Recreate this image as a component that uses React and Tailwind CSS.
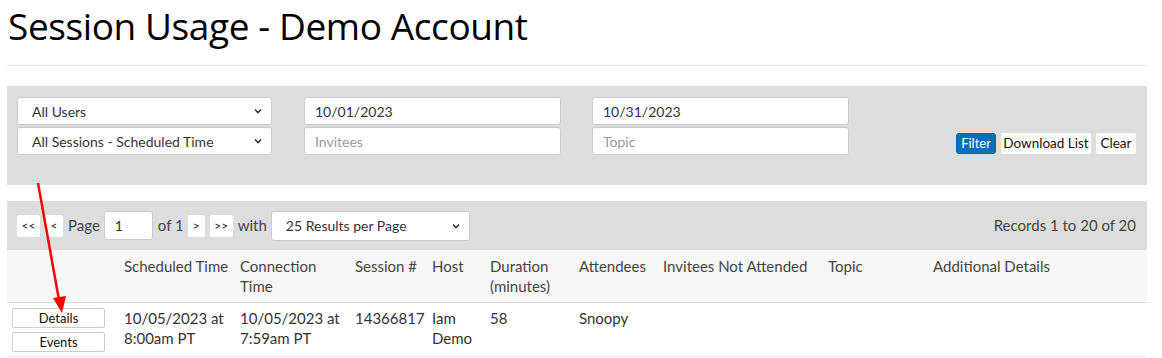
export default function App() {
  const font = { fontFamily: "Lato, 'Noto Sans', sans-serif" };
  const Chevron = () => (
    <svg width="10" height="10" viewBox="0 0 10 10" className="shrink-0">
      <path d="M2 3.5 L5 6.5 L8 3.5" fill="none" stroke="#333" strokeWidth="1.6" />
    </svg>
  );
  const Select = ({ text, className = "" }) => (
    <div className={`flex items-center justify-between bg-white border border-[#ccc] rounded-[3px] h-[28px] pl-[14px] pr-[8px] text-[14px] text-[#333] ${className}`}>
      <span>{text}</span>
      <Chevron />
    </div>
  );
  const Input = ({ text, placeholder }) => (
    <div className={`flex items-center bg-white border border-[#ccc] rounded-[3px] h-[28px] w-[257px] px-[10px] text-[14px] ${placeholder ? "text-[#999]" : "text-[#333]"}`}>
      {text}
    </div>
  );
  const SmallBtn = ({ children, className = "" }) => (
    <div className={`flex items-center justify-center bg-white rounded-[2px] h-[22px] text-[12px] text-[#222] ${className}`}>{children}</div>
  );
  const cols = [
    { w: 117, h: "" },
    { w: 116, h: "Scheduled Time" },
    { w: 115, h: "Connection Time" },
    { w: 77, h: "Session #" },
    { w: 58, h: "Host" },
    { w: 89, h: "Duration (minutes)" },
    { w: 84, h: "Attendees" },
    { w: 165, h: "Invitees Not Attended" },
    { w: 105, h: "Topic" },
    { w: 214, h: "Additional Details" },
  ];
  const row = ["", "10/05/2023 at 8:00am PT", "10/05/2023 at 7:59am PT", "14366817", "Iam Demo", "58", "Snoopy", "", "", ""];
  return (
    <div className="relative bg-white w-[1162px] h-[358px] overflow-hidden text-[#333]" style={font}>
      <div className="pl-[7px] pr-[15px] w-full">
        <h1 className="text-[37px] leading-[48px] pt-[2px] pl-[1px] text-black" style={{ fontFamily: "'Open Sans', sans-serif", letterSpacing: "-0.4px" }}>
          Session Usage - Demo Account
        </h1>
        <div className="h-px bg-[#e5e5e5] mt-[15px]" />
        <div className="mt-[20px] bg-[#dddddd] h-[99px] flex items-start pl-[10px] pr-[11px] pt-[11px]">
          <div className="flex flex-col gap-[2px] w-[255px]">
            <Select text="All Users" />
            <Select text="All Sessions - Scheduled Time" />
          </div>
          <div className="flex flex-col gap-[2px] ml-[32px]">
            <Input text="10/01/2023" />
            <Input text="Invitees" placeholder />
          </div>
          <div className="flex flex-col gap-[2px] ml-[31px]">
            <Input text="10/31/2023" />
            <Input text="Topic" placeholder />
          </div>
          <div className="ml-auto flex gap-[5px] mt-[36px]">
            <div className="flex items-center justify-center h-[21px] w-[40px] rounded-[3px] bg-[#0a6eb8] border border-[#0a5fa0] text-white text-[13px]">Filter</div>
            <div className="flex items-center justify-center h-[21px] w-[90px] rounded-[2px] bg-white text-[#111] text-[13.5px]">Download List</div>
            <div className="flex items-center justify-center h-[21px] w-[40px] rounded-[2px] bg-white text-[#111] text-[13.5px]">Clear</div>
          </div>
        </div>
        <div className="mt-[16px] bg-[#dddddd] h-[49px] flex items-center pl-[10px] pr-[11px] text-[15px] text-[#444]">
          <SmallBtn className="w-[23px]">&lt;&lt;</SmallBtn>
          <SmallBtn className="w-[18px] ml-[5px]">&lt;</SmallBtn>
          <span className="ml-[5px]">Page</span>
          <div className="ml-[4px] w-[49px] h-[29px] bg-white border border-[#ccc] rounded-[3px] flex items-center pl-[10px] text-[14px] text-[#333]">1</div>
          <span className="ml-[5px]">of 1</span>
          <SmallBtn className="w-[17px] ml-[4px]">&gt;</SmallBtn>
          <SmallBtn className="w-[23px] ml-[5px]">&gt;&gt;</SmallBtn>
          <span className="ml-[5px]">with</span>
          <Select text="25 Results per Page" className="ml-[4px] w-[199px] h-[30px] text-[13px] pl-[12px]" />
          <span className="ml-auto">Records 1 to 20 of 20</span>
        </div>
        <div className="flex bg-[#f7f7f7] border-b border-[#dddddd] h-[53px] text-[15px] text-[#444] leading-[20px] pt-[6px]">
          {cols.map((c, i) => (
            <div key={i} style={{ width: c.w }} className="shrink-0 pr-[6px]">{c.h}</div>
          ))}
        </div>
        <div className="flex border-b border-[#eeeeee] h-[54px] text-[15px] text-[#333] leading-[20px] pt-[5px]">
          {cols.map((c, i) => (
            <div key={i} style={{ width: c.w }} className="shrink-0 pr-[6px]">
              {i === 0 ? (
                <div className="flex flex-col gap-[4px] pl-[5px]">
                  <div className="w-[93px] h-[20px] border border-[#ccc] rounded-[2px] bg-white flex items-center justify-center text-[13px] text-[#111]">Details</div>
                  <div className="w-[93px] h-[20px] border border-[#ccc] rounded-[2px] bg-white flex items-center justify-center text-[13px] text-[#111]">Events</div>
                </div>
              ) : (
                row[i]
              )}
            </div>
          ))}
        </div>
      </div>
      <svg className="absolute left-0 top-0 pointer-events-none" width="1162" height="358">
        <line x1="38" y1="183" x2="59" y2="300" stroke="#ff0000" strokeWidth="2.5" />
        <polygon points="53,298 66,296 62,313" fill="#ff0000" />
      </svg>
    </div>
  );
}
